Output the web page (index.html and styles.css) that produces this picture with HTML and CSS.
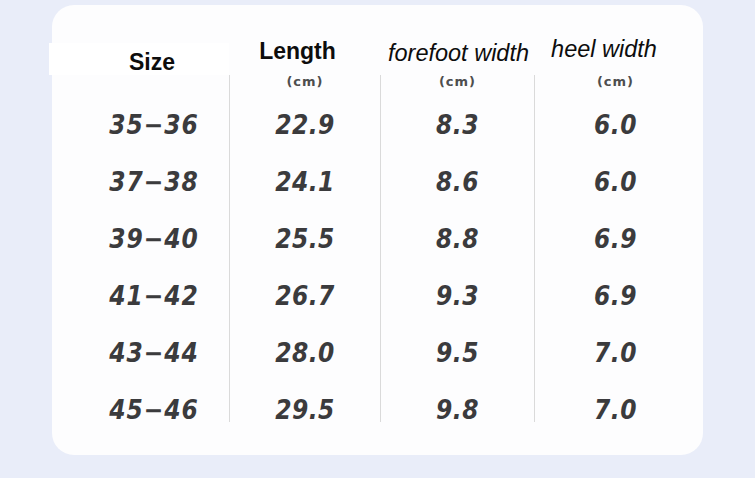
FILE: index.html
```html
<!DOCTYPE html>
<html>
<head>
<meta charset="utf-8">
<link rel="stylesheet" href="styles.css">
</head>
<body>
<div class="card">
  <div class="titles">
    <div class="title t-size"><span>Size</span></div>
    <div class="title t-length"><span>Length</span></div>
    <div class="title t-fore"><span>forefoot width</span></div>
    <div class="title t-heel"><span>heel width</span></div>
  </div>
  <div class="table">
    <div class="col c1">
      <div class="unit blank">&nbsp;</div>
      <div class="val range">35−36</div>
      <div class="val range">37−38</div>
      <div class="val range">39−40</div>
      <div class="val range">41−42</div>
      <div class="val range">43−44</div>
      <div class="val range">45−46</div>
    </div>
    <div class="col c2 line">
      <div class="unit">(cm)</div>
      <div class="val">22.9</div>
      <div class="val">24.1</div>
      <div class="val">25.5</div>
      <div class="val">26.7</div>
      <div class="val">28.0</div>
      <div class="val">29.5</div>
    </div>
    <div class="col c3 line">
      <div class="unit">(cm)</div>
      <div class="val">8.3</div>
      <div class="val">8.6</div>
      <div class="val">8.8</div>
      <div class="val">9.3</div>
      <div class="val">9.5</div>
      <div class="val">9.8</div>
    </div>
    <div class="col c4 line">
      <div class="unit">(cm)</div>
      <div class="val">6.0</div>
      <div class="val">6.0</div>
      <div class="val">6.9</div>
      <div class="val">6.9</div>
      <div class="val">7.0</div>
      <div class="val">7.0</div>
    </div>
  </div>
</div>
</body>
</html>
```

FILE: styles.css
```css
html, body {
  margin: 0;
  padding: 0;
}
body {
  background: #e9edf9;
  width: 755px;
  height: 478px;
  overflow: hidden;
  font-family: "Liberation Sans", Arial, sans-serif;
}
.card {
  margin: 5px 0 0 52px;
  width: 651px;
  height: 450px;
  box-sizing: border-box;
  background: #fdfdfe;
  border-radius: 22px;
  padding: 30px 0 0 27px;
}
.titles {
  display: grid;
  grid-template-columns: 150px 151px 154px 162px;
  height: 40px;
}
.title {
  font-size: 23px;
  line-height: 23px;
  color: #0d0d0d;
  text-align: center;
  white-space: nowrap;
}
.t-size {
  font-weight: bold;
  background: #ffffff;
  margin: 8px 0 0 -30px;
  padding: 7.5px 4px 0 30px;
  height: 32px;
  box-sizing: border-box;
}
.t-length {
  font-weight: bold;
  padding-top: 4.5px;
  padding-right: 14px;
}
.t-fore {
  font-style: italic;
  font-size: 23.5px;
  padding-top: 6.5px;
  padding-left: 3px;
}
.t-heel {
  font-style: italic;
  font-size: 23.5px;
  padding-top: 2.5px;
  padding-right: 22px;
}
.table {
  display: grid;
  grid-template-columns: 150px 151px 154px 162px;
  align-items: start;
}
.col {
  display: flex;
  flex-direction: column;
  align-items: center;
  gap: 33px;
}
.line {
  border-left: 1px solid #dadada;
}
.unit {
  font-family: "DejaVu Sans", sans-serif;
  font-weight: bold;
  font-size: 13px;
  line-height: 14px;
  color: #4e4e4e;
  letter-spacing: 1px;
  margin-bottom: -9.5px;
}
.val {
  font-family: "DejaVu Sans Condensed", "DejaVu Sans", sans-serif;
  font-stretch: condensed;
  font-weight: bold;
  font-style: oblique;
  font-size: 26px;
  line-height: 24px;
  color: #3b3b3d;
  letter-spacing: 0.5px;
  white-space: nowrap;
}
.range {
  letter-spacing: 1px;
}
```
